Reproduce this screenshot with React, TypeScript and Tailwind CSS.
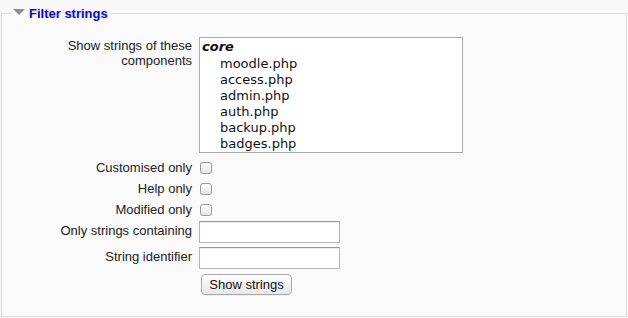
import React from "react";

const labelCls =
  "w-[190px] shrink-0 text-right text-[13px] text-[#222] [font-family:'Liberation_Sans',Arial,sans-serif]";

function Checkbox() {
  return (
    <span className="ml-[1px] block h-[12px] w-[12px] rounded-[3px] border border-[#9a9a9a] bg-gradient-to-b from-white to-[#e6e6e6] shadow-[inset_0_1px_0_#fff]" />
  );
}

function TextInput() {
  return (
    <span className="block h-[22px] w-[141px] border border-[#b5b5b5] border-t-[#999] bg-white shadow-[inset_0_1px_1px_rgba(0,0,0,0.08)]" />
  );
}

export default function App() {
  const files = ["moodle.php", "access.php", "admin.php", "auth.php", "backup.php", "badges.php"];
  return (
    <div className="h-[318px] w-[628px] overflow-hidden bg-[#f8f8f8] [font-family:'Liberation_Sans',Arial,sans-serif]">
      <fieldset className="ml-[1px] mt-[3px] h-[314px] w-[626px] border border-[#dcdcdc] bg-[#fafafa]">
        <legend className="ml-[9px] flex h-[20px] items-center px-[2px]">
          <svg width="12" height="6" viewBox="0 0 12 6" className="mr-[4px] mt-[-2px]">
            <path d="M0 0 H12 L6 6 Z" fill="#8f8f8f" />
          </svg>
          <span className="mt-[1px] text-[13px] font-bold leading-[20px] text-[#0000f0]">Filter strings</span>
        </legend>

        <div className="flex flex-col pt-[14px]">
          <div className="flex gap-x-[7px]">
            <div className={labelCls + " pt-[1px] leading-[15px]"}>
              Show strings of these
              <br />
              components
            </div>
            <div className="h-[116px] w-[264px] border border-[#aaa] bg-white px-[2px] pt-[1px] text-[13px] leading-[16px] text-[#111] [font-family:'DejaVu_Sans',sans-serif]">
              <div className="font-bold italic">core</div>
              {files.map((f, i) => (
                <div key={f} className={"pl-[18px]" + (i === 0 ? " mt-[1px]" : "")}>
                  {f}
                </div>
              ))}
            </div>
          </div>

          <div className="mt-[4px] flex h-[21px] items-center gap-x-[7px]">
            <div className={labelCls}>Customised only</div>
            <Checkbox />
          </div>
          <div className="flex h-[21px] items-center gap-x-[7px]">
            <div className={labelCls}>Help only</div>
            <Checkbox />
          </div>
          <div className="flex h-[21px] items-center gap-x-[7px]">
            <div className={labelCls}>Modified only</div>
            <Checkbox />
          </div>

          <div className="mt-[1px] flex h-[22px] items-center gap-x-[7px]">
            <div className={labelCls + " mt-[-3px]"}>Only strings containing</div>
            <TextInput />
          </div>
          <div className="mt-[4px] flex h-[22px] items-center gap-x-[7px]">
            <div className={labelCls + " mt-[-3px]"}>String identifier</div>
            <TextInput />
          </div>

          <div className="mt-[5px] flex gap-x-[7px]">
            <div className="w-[190px] shrink-0" />
            <button className="ml-[2px] flex h-[21px] w-[91px] items-center justify-center rounded-[4px] border border-[#a8a8a8] bg-gradient-to-b from-white to-[#e8e8e8] text-[13px] text-[#111] shadow-[0_1px_0_rgba(0,0,0,0.05)]">
              Show strings
            </button>
          </div>
        </div>
      </fieldset>
    </div>
  );
}
